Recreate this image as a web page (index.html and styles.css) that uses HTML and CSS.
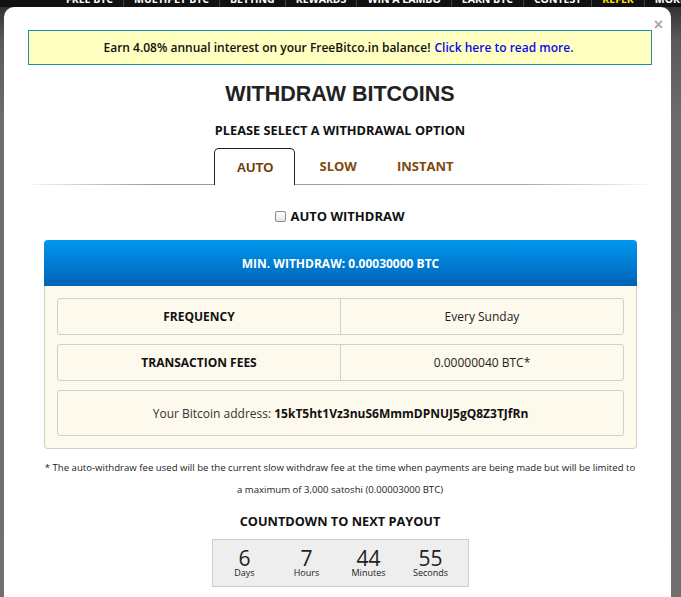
FILE: index.html
```html
<!DOCTYPE html>
<html>
<head>
<meta charset="utf-8">
<link rel="stylesheet" href="styles.css">
</head>
<body>
<nav class="topnav">
  <div class="navitems">
    <span class="nav sp1">FREE BTC</span>
    <span class="nav">MULTIPLY BTC</span>
    <span class="nav">BETTING</span>
    <span class="nav">REWARDS</span>
    <span class="nav">WIN A LAMBO</span>
    <span class="nav">EARN BTC</span>
    <span class="nav">CONTEST</span>
    <span class="nav refer">REFER</span>
    <span class="nav last">MORE</span>
  </div>
</nav>
<div class="modal">
  <span class="close">&#215;</span>
  <div class="banner">Earn 4.08% annual interest on your FreeBitco.in balance! <a href="#" class="bannerlink">Click here to read more.</a></div>
  <h1 class="title">WITHDRAW BITCOINS</h1>
  <h2 class="subtitle">PLEASE SELECT A WITHDRAWAL OPTION</h2>
  <div class="tabs">
    <div class="tab active">AUTO</div>
    <div class="tab">SLOW</div>
    <div class="tab">INSTANT</div>
  </div>
  <div class="autorow"><span class="check"></span><span class="autolabel">AUTO WITHDRAW</span></div>
  <div class="panelhead">MIN. WITHDRAW: 0.00030000 BTC</div>
  <div class="panelbody">
    <div class="row"><div class="cell key">FREQUENCY</div><div class="cell val">Every Sunday</div></div>
    <div class="row"><div class="cell key">TRANSACTION FEES</div><div class="cell val">0.00000040 BTC*</div></div>
    <div class="row addr">Your Bitcoin address:&nbsp;<b>15kT5ht1Vz3nuS6MmmDPNUJ5gQ8Z3TJfRn</b></div>
  </div>
  <p class="note">* The auto-withdraw fee used will be the current slow withdraw fee at the time when payments are being made but will be limited to a maximum of 3,000 satoshi (0.00003000 BTC)</p>
  <h3 class="cdtitle">COUNTDOWN TO NEXT PAYOUT</h3>
  <div class="countdown">
    <div class="cd"><span class="num">6</span><span class="lbl">Days</span></div>
    <div class="cd"><span class="num">7</span><span class="lbl">Hours</span></div>
    <div class="cd"><span class="num">44</span><span class="lbl">Minutes</span></div>
    <div class="cd"><span class="num">55</span><span class="lbl">Seconds</span></div>
  </div>
</div>
</body>
</html>
```
FILE: styles.css
```css
html, body {
  margin: 0;
  padding: 0;
  height: 100%;
  overflow: hidden;
}
body {
  background: linear-gradient(to bottom, #2a2a2a 0px, #5a5a5a 40px, #6d6d6d 120px, #707070 100%);
  font-family: "Open Sans", "Liberation Sans", sans-serif;
  color: #222;
}
.topnav {
  height: 7px;
  background: #111;
  overflow: hidden;
}
.navitems {
  display: flex;
  margin-top: -8px;
  height: 15px;
  font-family: "Open Sans", sans-serif;
  font-weight: 700;
  font-size: 10.5px;
  line-height: 15px;
  color: #fff;
  white-space: nowrap;
}
.nav {
  padding: 0 10px;
  border-right: 1px solid #444;
  flex: none;
}
.nav.sp1 { margin-left: 56px; }
.nav.last { border-right: none; }
.refer { color: #ffe600; }
.modal {
  position: relative;
  margin: 0 10px 0 4px;
  background: #fff;
  border-radius: 10px 10px 0 0;
  padding: 23px 19px 40px 24px;
  min-height: 600px;
}
.close {
  position: absolute;
  top: 10px;
  right: 8px;
  font-family: "Liberation Sans", sans-serif;
  font-weight: 700;
  font-size: 16px;
  line-height: 16px;
  color: #aaa;
}
.banner {
  height: 33px;
  border: 1px solid #1a8fa8;
  background: #ffffbf;
  display: flex;
  align-items: center;
  justify-content: center;
  font-size: 12px;
  font-weight: 600;
  color: #111;
  padding-right: 3px;
}
.bannerlink {
  color: #0a0aee;
  text-decoration: none;
  margin-left: 4px;
}
.title {
  margin: 17px 0 0 0;
  text-align: center;
  font-family: "Liberation Sans", Arial, sans-serif;
  font-weight: 700;
  font-size: 21.5px;
  line-height: 24px;
  color: #222;
}
.subtitle {
  margin: 16px 0 0 0;
  text-align: center;
  font-size: 12.75px;
  line-height: 16px;
  font-weight: 700;
  color: #111;
}
.tabs {
  margin: 10px 2px 0 2px;
  display: flex;
  justify-content: center;
  padding-left: 8px;
  position: relative;
  height: 37px;
}
.tabs::after {
  content: "";
  position: absolute;
  left: 0;
  right: 0;
  bottom: 0;
  height: 1px;
  background: linear-gradient(to right, rgba(160,160,160,0.1), #999 20%, #aaa 80%, rgba(200,200,200,0.1));
}
.tab {
  font-size: 13px;
  font-weight: 700;
  color: #80490c;
  padding: 0 19px;
  line-height: 34px;
  position: relative;
  z-index: 1;
  border: 1px solid transparent;
  border-bottom: none;
}
.tab.active {
  font-family: "Liberation Sans", Arial, sans-serif;
  border-color: #222;
  border-radius: 5px 5px 0 0;
  background: #fff;
  width: 81px;
  padding: 0;
  text-align: center;
  line-height: 38px;
  color: #6a3e08;
  height: 37px;
  box-sizing: border-box;
  margin-right: 4px;
}
.autorow {
  margin-top: 23px;
  display: flex;
  justify-content: center;
  align-items: center;
  height: 16px;
  padding-left: 0;
}
.check {
  width: 9px;
  height: 9px;
  border: 1px solid #888;
  border-radius: 2px;
  background: linear-gradient(#fff, #e6e6e6);
  margin-right: 4px;
}
.autolabel {
  font-size: 13px;
  font-weight: 700;
  color: #111;
}
.panelhead {
  margin: 16px 15px 0 16px;
  height: 46px;
  border-radius: 4px 4px 0 0;
  background: linear-gradient(to bottom, #0099ef, #0062b6);
  color: #fff;
  font-weight: 700;
  font-size: 12px;
  display: flex;
  align-items: center;
  justify-content: center;
}
.panelbody {
  margin: 0 15px 0 16px;
  background: #fdf9ec;
  border: 1px solid #cfcfcf;
  border-top: none;
  border-radius: 0 0 4px 4px;
  padding: 12px 12px 12px 12px;
  display: flex;
  flex-direction: column;
  gap: 9px;
}
.row {
  display: flex;
  border: 1px solid #cfcfcf;
  border-radius: 3px;
  height: 35px;
  background: #fdf9ec;
  font-size: 12px;
}
.cell {
  flex: 1;
  display: flex;
  align-items: center;
  justify-content: center;
}
.cell.key {
  font-weight: 700;
  border-right: 1px solid #cfcfcf;
  color: #111;
}
.cell.val {
  color: #222;
}
.row.addr {
  height: 44px;
  align-items: center;
  justify-content: center;
  color: #333;
}
.row.addr b { color: #111; }
.note {
  margin: 8px 0 0 0;
  text-align: center;
  font-size: 9.6px;
  line-height: 22px;
  color: #222;
  padding: 0 15px;
}
.cdtitle {
  margin: 12px 0 0 0;
  text-align: center;
  font-size: 12.75px;
  line-height: 16px;
  font-weight: 700;
  color: #111;
}
.countdown {
  margin: 10px auto 0 auto;
  width: 254px;
  height: 46px;
  border: 1px solid #ccc;
  background: #eeeeee;
  display: flex;
  justify-content: flex-start;
  padding: 0 0 0 1px;
}
.cd {
  width: 62px;
  display: flex;
  flex-direction: column;
  align-items: center;
  padding-top: 8px;
}
.num {
  font-size: 21px;
  line-height: 20px;
  color: #222;
}
.lbl {
  font-size: 9px;
  line-height: 10px;
  color: #222;
}
```
